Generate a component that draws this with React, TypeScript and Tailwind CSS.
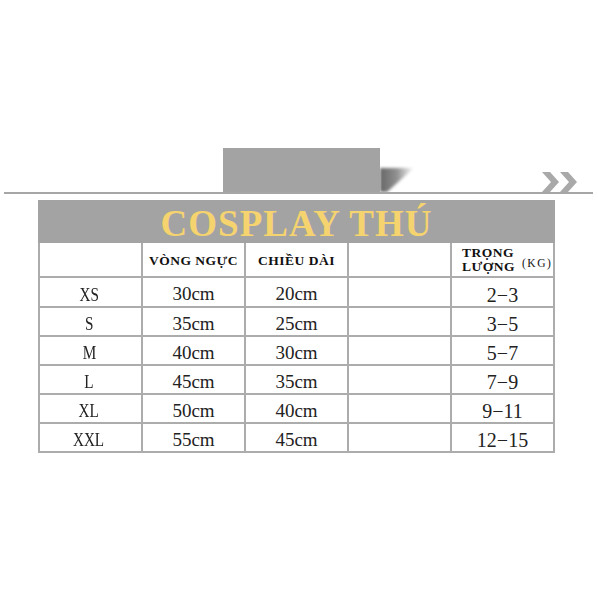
import React from "react";

const rows = [
  ["XS", "30cm", "20cm", "2−3"],
  ["S", "35cm", "25cm", "3−5"],
  ["M", "40cm", "30cm", "5−7"],
  ["L", "45cm", "35cm", "7−9"],
  ["XL", "50cm", "40cm", "9−11"],
  ["XXL", "55cm", "45cm", "12−15"],
];

const serif = { fontFamily: '"Liberation Serif", "DejaVu Serif", serif' };

export default function App() {
  return (
    <div className="w-[598px] h-[598px] bg-white overflow-hidden" style={serif}>
      <div className="pt-[148px] flex flex-row h-[192px]">
        <div className="ml-[223px] w-[157px] h-[44px] bg-[#a3a3a3]" />
        <svg width="40" height="44" viewBox="0 0 40 44">
          <defs>
            <linearGradient id="sg" x1="0" x2="1" y1="0" y2="0">
              <stop offset="0" stopColor="#666666" />
              <stop offset="0.5" stopColor="#919191" />
              <stop offset="1" stopColor="#ffffff" />
            </linearGradient>
            <filter id="bl" x="-20%" y="-20%" width="140%" height="140%">
              <feGaussianBlur stdDeviation="1.4" />
            </filter>
          </defs>
          <polygon points="0,20 34,20 7,44 0,44" fill="url(#sg)" filter="url(#bl)" />
        </svg>
        <svg width="36" height="20" viewBox="0 0 36 20" className="ml-auto mr-[20px] self-end">
          <polygon points="0,0 8,0 17,10 8,20 0,20 9,10" fill="#a9a9a9" />
          <polygon points="18,0 26,0 35,10 26,20 18,20 27,10" fill="#a9a9a9" />
        </svg>
      </div>
      <div className="ml-[4px] w-[589px] h-[2px] bg-[#a6a6a6]" />
      <div className="mt-[6px] ml-[38px] w-[517px] bg-[#acacac] px-[2px] pb-[2px]">
        <div className="h-[43px] flex items-center justify-center bg-[#a3a3a3] -mx-[2px]">
          <span className="text-[37px] font-bold tracking-[1px] text-[#f5d36f] leading-none pt-[3px]">
            COSPLAY THÚ
          </span>
        </div>
        <div className="grid grid-cols-[101px_101px_101px_101px_101px] grid-rows-[33px_28px_27px_27px_27px_27px_27px] gap-[2px]">
          <div className="bg-white" />
          <div className="bg-white flex items-center justify-center pt-[4px]">
            <span className="text-[13.5px] font-bold tracking-[0.5px] text-[#111]">VÒNG NGỰC</span>
          </div>
          <div className="bg-white flex items-center justify-center pt-[4px]">
            <span className="text-[13.5px] font-bold tracking-[0.5px] text-[#111]">CHIỀU DÀI</span>
          </div>
          <div className="bg-white" />
          <div className="bg-white flex items-center pl-[10px] pt-[1px] overflow-hidden">
            <div className="flex flex-col leading-[14px] text-[13.5px] font-bold tracking-[0.5px] text-[#111]">
              <span>TRỌNG</span>
              <span>LƯỢNG</span>
            </div>
            <span className="ml-[7px] mt-[8px] text-[11.5px] tracking-[1.5px] text-[#111] whitespace-nowrap">(KG)</span>
          </div>
          {rows.map((r) => (
            <React.Fragment key={r[0]}>
              <div className="bg-white flex items-center justify-center pt-[4px] pr-[3px]">
                <span className="inline-block text-[19px] text-[#222] leading-none scale-x-[0.8]">{r[0]}</span>
              </div>
              <div className="bg-white flex items-center justify-center pt-[3px]">
                <span className="text-[19px] text-[#222] leading-none">{r[1]}</span>
              </div>
              <div className="bg-white flex items-center justify-center pt-[3px]">
                <span className="text-[19px] text-[#222] leading-none">{r[2]}</span>
              </div>
              <div className="bg-white" />
              <div className="bg-white flex items-center justify-center pt-[5px]">
                <span className="text-[20px] text-[#222] leading-none">{r[3]}</span>
              </div>
            </React.Fragment>
          ))}
        </div>
      </div>
    </div>
  );
}
